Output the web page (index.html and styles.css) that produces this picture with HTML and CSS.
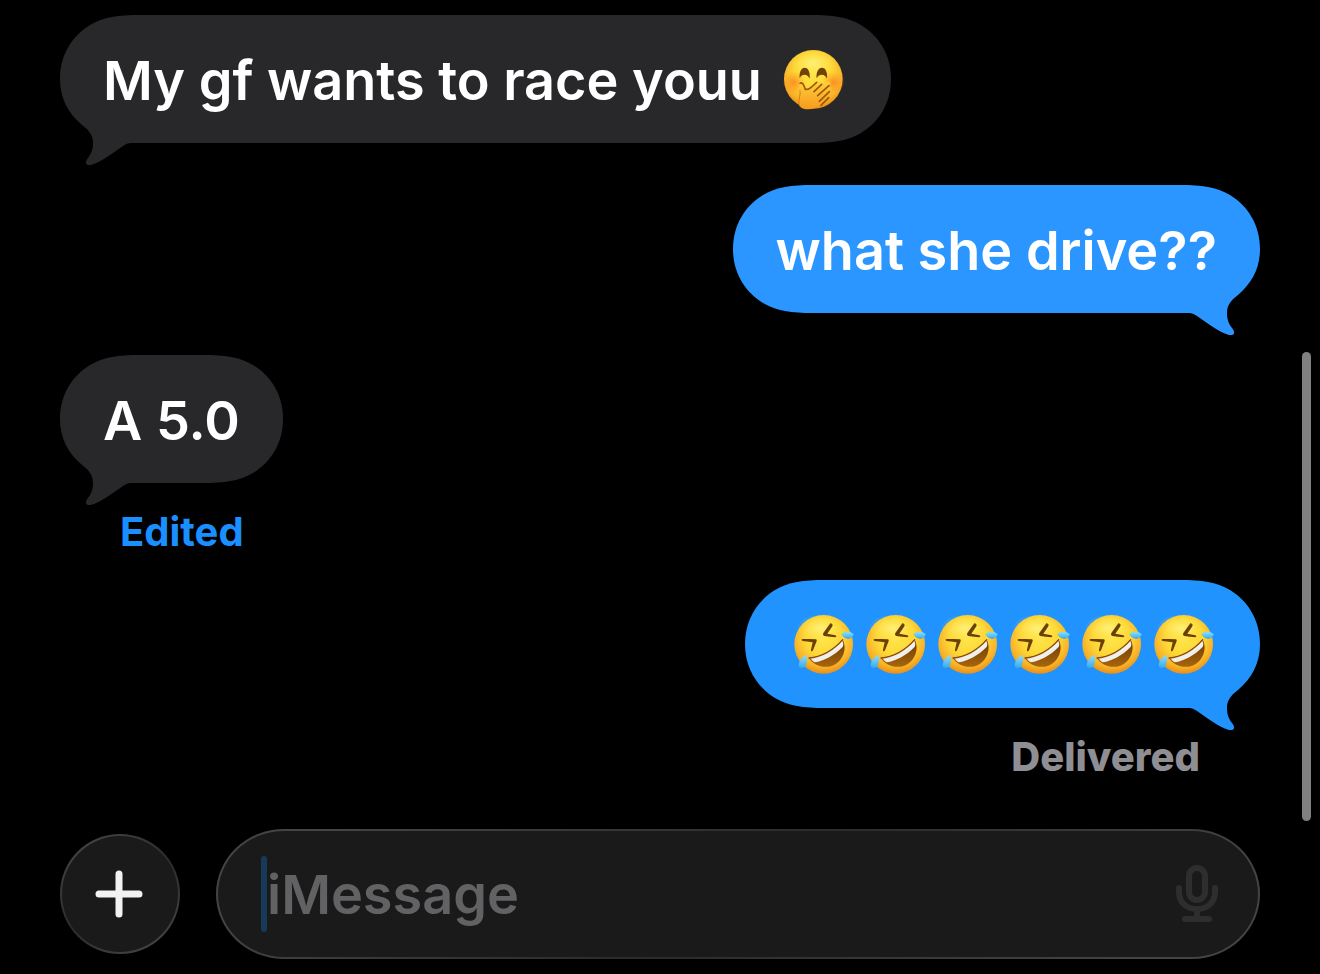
FILE: index.html
```html
<!DOCTYPE html>
<html lang="en">
<head>
<meta charset="utf-8">
<meta name="viewport" content="width=device-width, initial-scale=1">
<title>Messages</title>
<link rel="stylesheet" href="styles.css">
</head>
<body>
<svg class="defs" aria-hidden="true">
  <defs>
    <radialGradient id="face" cx="0.5" cy="0.38" r="0.64">
      <stop offset="0" stop-color="#ffe64a"/>
      <stop offset="0.5" stop-color="#fdd736"/>
      <stop offset="0.8" stop-color="#f8b229"/>
      <stop offset="1" stop-color="#e68a12"/>
    </radialGradient>
    <radialGradient id="shine">
      <stop offset="0" stop-color="#fff48c" stop-opacity="0.8"/>
      <stop offset="1" stop-color="#ffe94e" stop-opacity="0"/>
    </radialGradient>
    <radialGradient id="blush">
      <stop offset="0" stop-color="#ff7a1c" stop-opacity="0.75"/>
      <stop offset="1" stop-color="#ff8c1c" stop-opacity="0"/>
    </radialGradient>
    <linearGradient id="hand" x1="0" y1="0" x2="0" y2="1">
      <stop offset="0" stop-color="#ffcf3e"/>
      <stop offset="1" stop-color="#f79a1c"/>
    </linearGradient>
    <linearGradient id="mouth" x1="0" y1="0" x2="0" y2="1">
      <stop offset="0" stop-color="#6a3a04"/>
      <stop offset="1" stop-color="#a8650c"/>
    </linearGradient>
    <linearGradient id="tear" x1="0" y1="0" x2="0" y2="1">
      <stop offset="0" stop-color="#8be0fa"/>
      <stop offset="1" stop-color="#3aa9e6"/>
    </linearGradient>
  </defs>
  <symbol id="cap-round" viewBox="0 0 80 150">
    <path d="M0 0C22 0 36 2 50 10C68 21 80 40 80 64C80 88 68 107 50 118C36 126 22 128 0 128Z"/>
  </symbol>
  <symbol id="cap-tail" viewBox="0 0 80 150">
    <path d="M0 0C22 0 36 2 50 10C68 21 80 40 80 64C80 83 72 98 58 110C50 116 47 121 47 128C47 135 49 139 52 143C56 148 54 151 49 150C38 147 25 136 17 131C14 129 12 128 9 128H0Z"/>
  </symbol>
  <symbol id="giggle" viewBox="27 24 216 216">
    <circle cx="130" cy="133" r="88" fill="url(#face)"/>
    <ellipse cx="130" cy="84" rx="70" ry="40" fill="url(#shine)"/>
    <circle cx="72" cy="142" r="34" fill="url(#blush)"/>
    <circle cx="190" cy="142" r="34" fill="url(#blush)"/>
    <path d="M89 130C87 111 94 98 104 98C115 98 121 112 119 131C113 116 95 116 89 130Z" fill="#704408"/>
    <path d="M140 130C138 111 145 98 156 98C167 98 173 112 171 131C165 116 147 116 140 130Z" fill="#704408"/>
    <path d="M88 142C95 134 102 143 106 163L146 142C156 137 158 145 152 150L174 140C184 139 182 148 176 152L180 157C187 158 183 166 177 170L181 176C184 182 178 185 173 187L153 207C139 222 107 229 92 217C79 205 91 181 88 142Z" fill="url(#hand)"/>
    <path d="M90 145C96 140 101 148 106 163C119 165 124 156 140 142M132 170L155 148M143 182L177 152M148 199L178 170M153 211L176 188" fill="none" stroke="#9b5908" stroke-width="5" stroke-linecap="round" stroke-linejoin="round"/>
    <path d="M90 166C93 185 80 202 91 215" fill="none" stroke="#d98010" stroke-width="3"/>
  </symbol>
  <symbol id="rofl" viewBox="12 24 216 216">
    <circle cx="128" cy="133" r="88" fill="url(#face)"/>
    <ellipse cx="118" cy="84" rx="70" ry="40" fill="url(#shine)"/>
    <path d="M65 117C79 117 92 117 104 118C108 119 108 122 106 126L96 151C94 156 89 154 90 149L95 127L65 123C61 122 61 117 65 117Z" fill="#6b4004"/>
    <path d="M153 72C156 74 155 77 153 80L139 101L163 106C167 107 167 111 163 112C152 111 141 110 130 108C126 107 125 103 127 99C133 90 140 80 147 71C149 69 151 70 153 72Z" fill="#6b4004"/>
    <path d="M84 174C119 172 158 151 185 119C202 151 180 194 143 200C118 203 96 194 84 174Z" fill="url(#mouth)"/>
    <path d="M88 174C121 170 157 151 184 122C188 130 188 137 184 142C162 165 129 184 101 187C96 184 91 179 88 174Z" fill="#f1efec"/>
    <path d="M84 174C119 172 158 151 185 119" fill="none" stroke="#8a4f08" stroke-width="4" stroke-linecap="round"/>
    <path d="M181 103C189 92 211 94 218 103C214 121 192 122 181 103Z" fill="url(#tear)"/>
    <path d="M77 165C58 172 50 190 55 201C69 212 82 194 77 165Z" fill="url(#tear)"/>
  </symbol>
</svg>

<main class="thread">
  <section class="message received">
    <div class="bubble gray">
      <svg class="cap left" aria-hidden="true"><use href="#cap-tail"/></svg>
      <span class="fill"></span>
      <svg class="cap right" aria-hidden="true"><use href="#cap-round"/></svg>
      <p class="text ends-emoji">My gf wants to race youu<svg class="emoji spaced" role="img" aria-label="Face with hand over mouth"><use href="#giggle"/></svg></p>
    </div>
  </section>

  <section class="message sent">
    <div class="bubble blue-light">
      <svg class="cap left" aria-hidden="true"><use href="#cap-round"/></svg>
      <span class="fill"></span>
      <svg class="cap right" aria-hidden="true"><use href="#cap-tail"/></svg>
      <p class="text">what she drive??</p>
    </div>
  </section>

  <section class="message received">
    <div class="bubble gray">
      <svg class="cap left" aria-hidden="true"><use href="#cap-tail"/></svg>
      <span class="fill"></span>
      <svg class="cap right" aria-hidden="true"><use href="#cap-round"/></svg>
      <p class="text">A 5.0</p>
    </div>
    <button class="edited" type="button">Edited</button>
  </section>

  <section class="message sent">
    <div class="bubble blue">
      <svg class="cap left" aria-hidden="true"><use href="#cap-round"/></svg>
      <span class="fill"></span>
      <svg class="cap right" aria-hidden="true"><use href="#cap-tail"/></svg>
      <p class="text starts-emoji"><svg class="emoji" role="img" aria-label="Rolling on the floor laughing"><use href="#rofl"/></svg><svg class="emoji" role="img" aria-label="Rolling on the floor laughing"><use href="#rofl"/></svg><svg class="emoji" role="img" aria-label="Rolling on the floor laughing"><use href="#rofl"/></svg><svg class="emoji" role="img" aria-label="Rolling on the floor laughing"><use href="#rofl"/></svg><svg class="emoji" role="img" aria-label="Rolling on the floor laughing"><use href="#rofl"/></svg><svg class="emoji" role="img" aria-label="Rolling on the floor laughing"><use href="#rofl"/></svg></p>
    </div>
    <p class="delivered">Delivered</p>
  </section>
</main>

<form class="composer">
  <button class="add" type="button" aria-label="Add attachment">
    <svg class="plus" viewBox="0 0 48 48" aria-hidden="true"><path d="M24 4V44M4 24H44"/></svg>
  </button>
  <div class="field">
    <span class="caret"></span>
    <input class="entry" type="text" placeholder="iMessage" aria-label="iMessage">
    <button class="dictate" type="button" aria-label="Dictate">
      <svg class="mic" viewBox="0 0 42 58" aria-hidden="true"><rect x="13" y="3" width="16" height="32" rx="8"/><path d="M3 23V27C3 38 11 44 21 44C31 44 39 38 39 27V23M21 44V54M9 54H33"/></svg>
    </button>
  </div>
</form>
<div class="scrollbar"></div>
</body>
</html>
```

FILE: styles.css
```css
* {
  box-sizing: border-box;
}

body {
  margin: 0;
  min-height: 100vh;
  padding: 15px 60px;
  display: flex;
  flex-direction: column;
  background: #000;
  color: #fff;
  font-family: Inter, "Liberation Sans", sans-serif;
}

p {
  margin: 0;
}

button {
  padding: 0;
  border: 0;
  background: none;
  font: inherit;
}

.defs {
  position: absolute;
  width: 0;
  height: 0;
}

.thread {
  display: flex;
  flex-direction: column;
  gap: 20px;
}

.message {
  display: flex;
  flex-direction: column;
}

.received {
  align-items: flex-start;
}

.sent {
  align-items: flex-end;
}

.bubble {
  display: grid;
  grid-template-columns: 80px 1fr 80px;
  grid-template-rows: 128px 22px;
}

.gray {
  --fill: #28282a;
}

.blue-light {
  --fill: #2b96ff;
}

.blue {
  --fill: #2193ff;
}

.cap {
  grid-row: 1 / 3;
  width: 80px;
  height: 150px;
  fill: var(--fill);
}

.cap.left {
  grid-column: 1;
  transform: scaleX(-1);
}

.cap.right {
  grid-column: 3;
}

.fill {
  grid-column: 2;
  grid-row: 1;
  margin: 0 -1px;
  background: var(--fill);
}

.text {
  grid-column: 1 / 4;
  grid-row: 1;
  z-index: 1;
  display: flex;
  align-items: center;
  padding: 4px 43px 0;
  font-size: 54px;
  font-weight: 600;
  line-height: 72px;
  white-space: nowrap;
}

.text.ends-emoji {
  padding-right: 40px;
}

.text.starts-emoji {
  padding-left: 40px;
}

.emoji {
  width: 72px;
  height: 72px;
  margin-top: -4px;
}

.emoji.spaced {
  margin-left: 17px;
}

.edited,
.delivered {
  padding-bottom: 2px;
  font-size: 40px;
  line-height: 53px;
}

.edited {
  margin-left: 60px;
  color: #1a8fff;
  font-weight: 700;
}

.delivered {
  margin-right: 60px;
  color: #8e8e93;
  font-weight: 800;
}

.composer {
  display: flex;
  align-items: center;
  gap: 36px;
  margin-top: 44px;
}

.add,
.field {
  border: 2px solid transparent;
  background:
    linear-gradient(#1a1a1a, #1a1a1a) padding-box,
    linear-gradient(145deg, #444 10%, #2b2b2b 50%, #444 90%) border-box;
}

.add {
  display: grid;
  flex: none;
  place-items: center;
  width: 120px;
  height: 120px;
  border-radius: 50%;
}

.plus {
  width: 48px;
  height: 48px;
  margin-right: 2px;
  fill: none;
  stroke: #f2f2f2;
  stroke-width: 7;
  stroke-linecap: round;
}

.field {
  display: flex;
  flex: 1;
  align-items: center;
  height: 130px;
  padding: 0 40px 0 43px;
  border-radius: 68px / 65px;
}

.caret {
  width: 6px;
  height: 76px;
  border-radius: 3px;
  background: #173a5a;
}

.entry {
  flex: 1;
  min-width: 0;
  height: 80px;
  padding: 0;
  border: 0;
  outline: 0;
  background: none;
  color: #fff;
  font: 600 54px Inter, "Liberation Sans", sans-serif;
}

.entry::placeholder {
  color: #626264;
  opacity: 1;
}

.mic {
  display: block;
  width: 42px;
  height: 58px;
  fill: none;
  stroke: #2e2e2e;
  stroke-width: 6;
  stroke-linecap: round;
}

.scrollbar {
  position: absolute;
  top: 352px;
  right: 9px;
  width: 9px;
  height: 469px;
  border-radius: 5px;
  background: #808080;
}
```
